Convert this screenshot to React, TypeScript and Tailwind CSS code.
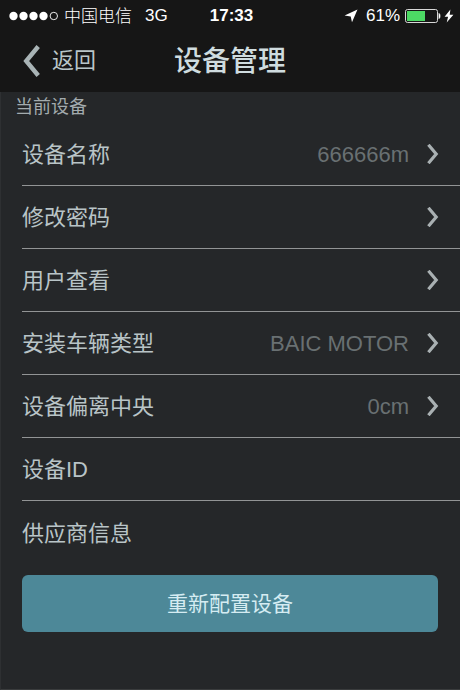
interface SettingItem {
  label: string
  value?: string
  hasLink?: boolean
}

const items: SettingItem[] = [
  { label: "设备名称", value: "666666m", hasLink: true },
  { label: "修改密码", hasLink: true },
  { label: "用户查看", hasLink: true },
  { label: "安装车辆类型", value: "BAIC MOTOR", hasLink: true },
  { label: "设备偏离中央", value: "0cm", hasLink: true },
  { label: "设备ID" },
  { label: "供应商信息" },
]

function StatusBar() {
  return (
    <div className="grid h-[30px] grid-cols-[1fr_auto_1fr] items-center pr-[6px] pl-[9px] text-[17px] leading-[30px] text-white">
      <div className="flex items-center">
        <svg width="50" height="10" viewBox="0 0 50 10" fill="white" aria-hidden="true">
          <circle cx="4.5" cy="5" r="4.2" />
          <circle cx="14.5" cy="5" r="4.2" />
          <circle cx="24.5" cy="5" r="4.2" />
          <circle cx="34.5" cy="5" r="4.2" />
          <circle cx="44.8" cy="5" r="3.7" fill="none" stroke="white" strokeWidth="0.9" />
        </svg>
        <span className="ml-[5px] pt-[2px] font-light">中国电信</span>
        <span className="ml-[13px]">3G</span>
      </div>
      <div className="font-bold">17:33</div>
      <div className="flex items-center justify-end">
        <svg className="mr-2" width="14" height="14" viewBox="0 0 14 14" fill="white" aria-hidden="true">
          <path d="M13.5 0.5 8 13.3 6.7 7.4 0.6 6.6Z" />
        </svg>
        <span className="mr-[5px]">61%</span>
        <svg className="mr-[3px]" width="36" height="14" viewBox="0 0 36 14" aria-hidden="true">
          <rect x="0.5" y="0.5" width="32" height="13" rx="2" fill="none" stroke="#d8d8d8" />
          <rect x="2" y="2" width="18" height="10" fill="#4cd964" />
          <path d="M34 4.5c1.3 0.6 1.3 4.4 0 5Z" fill="white" stroke="white" strokeWidth="0.8" />
        </svg>
        <svg width="10" height="14" viewBox="0 0 10 14" fill="white" aria-hidden="true">
          <path d="M6.4 0.4 0.6 7.8h3.5L2.7 13.6 9.4 5.7H5.7Z" />
        </svg>
      </div>
    </div>
  )
}

function NavBar() {
  return (
    <div className="grid h-[62px] grid-cols-[1fr_auto_1fr] items-center px-[22px] text-[#cfdcdf]">
      <button type="button" className="flex items-center gap-[11px] text-[22px] leading-[30px]">
        <svg width="19" height="32" viewBox="0 0 19 32" fill="none" stroke="#a9b4b6" strokeWidth="4.4" aria-hidden="true">
          <path d="M16.2 1.5 4.2 16 16.2 30.5" />
        </svg>
        <span className="text-[#b9c5c8]">返回</span>
      </button>
      <h1 className="pt-[2px] text-[28px] leading-[40px] font-medium">设备管理</h1>
    </div>
  )
}

function SettingRow({ label, value, hasLink }: SettingItem) {
  const content = (
    <>
      <span className="pt-[2px] text-[#b9c4c7]">{label}</span>
      <span className="flex items-center gap-[17px]">
        {value && <span className="pt-[2px] text-[#697072]">{value}</span>}
        {hasLink && (
          <svg width="13" height="20" viewBox="0 0 13 20" fill="none" stroke="#a9b0b2" strokeWidth="3.2" aria-hidden="true">
            <path d="M2.4 0.8 10.2 10 2.4 19.2" />
          </svg>
        )}
      </span>
    </>
  )

  return (
    <li className="h-[63px] border-b border-[#929495] last:border-b-0">
      {hasLink ? (
        <button type="button" className="flex h-full w-full items-center justify-between pr-[21px] text-left">
          {content}
        </button>
      ) : (
        <div className="flex h-full items-center justify-between pr-[21px]">{content}</div>
      )}
    </li>
  )
}

export default function App() {
  return (
    <div className="flex min-h-screen flex-col bg-[#252729] font-['Liberation_Sans','Noto_Sans_CJK_SC',sans-serif]">
      <header className="bg-[#161616]">
        <StatusBar />
        <NavBar />
      </header>
      <main className="flex-1 border-b border-b-[#3a3c3d] border-l border-l-[#2e3032] pb-8">
        <h2 className="pl-[14px] text-[18px] leading-[31px] text-[#a3abae]">当前设备</h2>
        <ul className="pl-[21px] text-[22px] leading-[32px]">
          {items.map((item) => (
            <SettingRow key={item.label} {...item} />
          ))}
        </ul>
        <div className="pt-[11px] pr-[22px] pl-[21px]">
          <button
            type="button"
            className="h-[57px] w-full rounded-md bg-[#4d8898] text-[21px] leading-[32px] text-[#d5ecf2]"
          >
            重新配置设备
          </button>
        </div>
      </main>
    </div>
  )
}
